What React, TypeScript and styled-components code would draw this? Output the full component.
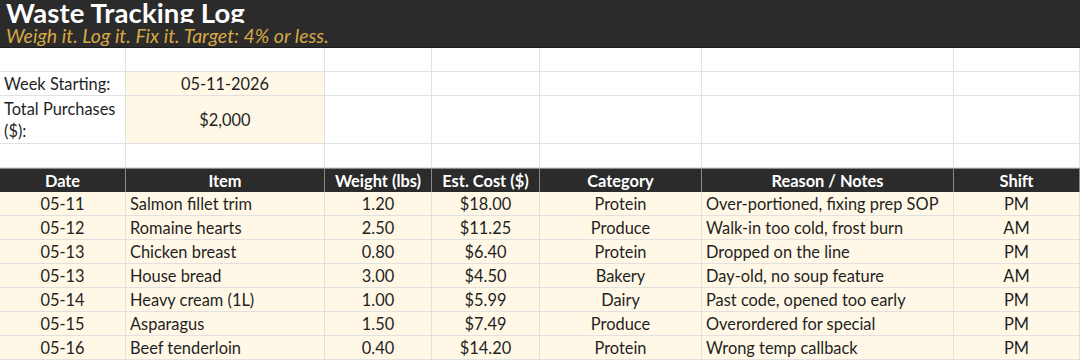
import styled, { createGlobalStyle } from "styled-components";

const GlobalStyle = createGlobalStyle`
  html, body {
    margin: 0;
    padding: 0;
    background: #ffffff;
  }
  body {
    font-family: Lato, "Open Sans", sans-serif;
    color: #1f1f1f;
  }
`;

const COLS = "126px 199px 107px 108px 162px 252px 126px";

type Entry = {
  date: string;
  item: string;
  weight: string;
  cost: string;
  category: string;
  reason: string;
  shift: string;
};

const entries: Entry[] = [
  { date: "05-11", item: "Salmon fillet trim", weight: "1.20", cost: "$18.00", category: "Protein", reason: "Over-portioned, fixing prep SOP", shift: "PM" },
  { date: "05-12", item: "Romaine hearts", weight: "2.50", cost: "$11.25", category: "Produce", reason: "Walk-in too cold, frost burn", shift: "AM" },
  { date: "05-13", item: "Chicken breast", weight: "0.80", cost: "$6.40", category: "Protein", reason: "Dropped on the line", shift: "PM" },
  { date: "05-13", item: "House bread", weight: "3.00", cost: "$4.50", category: "Bakery", reason: "Day-old, no soup feature", shift: "AM" },
  { date: "05-14", item: "Heavy cream (1L)", weight: "1.00", cost: "$5.99", category: "Dairy", reason: "Past code, opened too early", shift: "PM" },
  { date: "05-15", item: "Asparagus", weight: "1.50", cost: "$7.49", category: "Produce", reason: "Overordered for special", shift: "PM" },
  { date: "05-16", item: "Beef tenderloin", weight: "0.40", cost: "$14.20", category: "Protein", reason: "Wrong temp callback", shift: "PM" },
];

const headers = ["Date", "Item", "Weight (lbs)", "Est. Cost ($)", "Category", "Reason / Notes", "Shift"];

const App = () => {
  return (
    <Sheet>
      <GlobalStyle />
      <TitleBar>
        <Title>Waste Tracking Log</Title>
        <Subtitle>Weigh it. Log it. Fix it. Target: 4% or less.</Subtitle>
      </TitleBar>

      <Row>
        {headers.map((h) => (
          <Cell key={h} />
        ))}
      </Row>

      <Row>
        <Cell $align="left">Week Starting:</Cell>
        <Cell $fill>05-11-2026</Cell>
        <Cell />
        <Cell />
        <Cell />
        <Cell />
        <Cell />
      </Row>

      <Row $tall>
        <Cell $align="left" $wrap>
          Total Purchases ($):
        </Cell>
        <Cell $fill>$2,000</Cell>
        <Cell />
        <Cell />
        <Cell />
        <Cell />
        <Cell />
      </Row>

      <Row>
        {headers.map((h) => (
          <Cell key={h} />
        ))}
      </Row>

      <Row>
        {headers.map((h) => (
          <HeadCell key={h}>{h}</HeadCell>
        ))}
      </Row>

      {entries.map((e, i) => (
        <Row key={i}>
          <Cell $fill>{e.date}</Cell>
          <Cell $fill $align="left">{e.item}</Cell>
          <Cell $fill>{e.weight}</Cell>
          <Cell $fill>{e.cost}</Cell>
          <Cell $fill>{e.category}</Cell>
          <Cell $fill $align="left">{e.reason}</Cell>
          <Cell $fill>{e.shift}</Cell>
        </Row>
      ))}
    </Sheet>
  );
};

export default App;

const Sheet = styled.div`
  width: 1080px;
  height: 360px;
  overflow: hidden;
  font-size: 16.4px;
`;

const TitleBar = styled.div`
  background: #2b2b2b;
  height: 48px;
  box-sizing: border-box;
  border-bottom: 1px solid #1c1c1c;
  display: flex;
  flex-direction: column;
`;

/* the sheet row is shorter than the title font, so its descenders get clipped */
const Title = styled.div`
  height: 24px;
  box-sizing: border-box;
  overflow: hidden;
  padding: 1px 0 0 6px;
  color: #ffffff;
  font-weight: 700;
  font-size: 27.5px;
  line-height: 24px;
  letter-spacing: 0.1px;
`;

const Subtitle = styled.div`
  height: 24px;
  box-sizing: border-box;
  padding: 2px 0 0 6px;
  color: #d6a845;
  font-style: italic;
  font-size: 19.5px;
  line-height: 21px;
`;

const Row = styled.div<{ $tall?: boolean }>`
  display: grid;
  grid-template-columns: ${COLS};
  height: ${(p) => (p.$tall ? "48px" : "24px")};
`;

const Cell = styled.div<{ $align?: "left" | "center"; $fill?: boolean; $wrap?: boolean }>`
  box-sizing: border-box;
  border-right: 1px solid #e1e1e1;
  border-bottom: 1px solid #e1e1e1;
  background: ${(p) => (p.$fill ? "#fff8e6" : "#ffffff")};
  display: flex;
  align-items: center;
  justify-content: ${(p) => (p.$align === "left" ? "flex-start" : "center")};
  padding: 1px 4px 0;
  white-space: ${(p) => (p.$wrap ? "normal" : "nowrap")};
  line-height: ${(p) => (p.$wrap ? "22px" : "24px")};
  overflow: hidden;
`;

const HeadCell = styled.div`
  box-sizing: border-box;
  background: #2b2b2b;
  color: #ffffff;
  font-weight: 700;
  border-right: 1px solid #8a8a8a;
  border-top: 1px solid #8a8a8a;
  display: flex;
  align-items: center;
  justify-content: center;
  white-space: nowrap;
`;
